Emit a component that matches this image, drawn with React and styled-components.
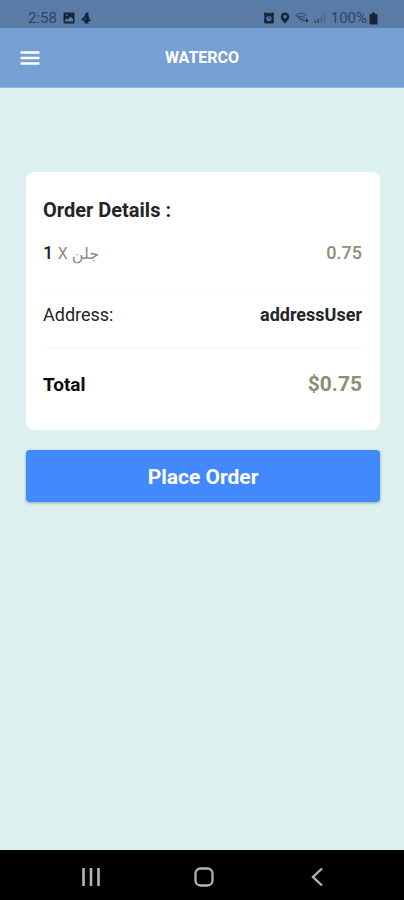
import styled, { createGlobalStyle } from 'styled-components';

const GlobalStyle = createGlobalStyle`
  * {
    box-sizing: border-box;
  }
  body {
    margin: 0;
    background-color: #dcf0ef;
    font-family: Roboto, 'DejaVu Sans', sans-serif;
    color: #222428;
  }
`;

const Page = styled.div`
  display: flex;
  flex-direction: column;
  min-height: 100vh;
`;

const StatusBar = styled.div`
  display: flex;
  align-items: center;
  justify-content: space-between;
  height: 28px;
  padding: 8px 26px 0 28px;
  background-color: #5a7ba6;
  color: #30435c;
  font-size: 15px;
  line-height: 20px;
`;

const StatusGroup = styled.div`
  display: flex;
  align-items: center;
  gap: ${props => props.$gap};
`;

const StatusIcon = styled.svg`
  display: block;
  flex: none;
  color: #17253a;
`;

const Toolbar = styled.header`
  display: grid;
  grid-template-columns: 60px 1fr 60px;
  align-items: center;
  height: 60px;
  background-color: #769fd3;
  border-bottom: 1px solid #8eb4d4;
  color: #ffffff;
`;

const MenuButton = styled.button`
  display: flex;
  align-items: center;
  justify-content: center;
  height: 48px;
  padding: 0;
  border: none;
  background: transparent;
  color: inherit;
  cursor: pointer;
`;

const ToolbarTitle = styled.h1`
  margin: 0;
  text-align: center;
  font-size: 16px;
  font-weight: 700;
  line-height: 24px;
`;

const Content = styled.main`
  flex: 1;
  padding: 84px 24px 24px 26px;
`;

const Card = styled.section`
  padding: 22px 18px 10px 17px;
  border-radius: 8px;
  background-color: #ffffff;
`;

const CardTitle = styled.h2`
  margin: 0;
  font-size: 20px;
  font-weight: 700;
  line-height: 32px;
`;

const Row = styled.div`
  display: flex;
  align-items: center;
  justify-content: space-between;
  height: ${props => props.$height};
`;

const Divider = styled.hr`
  height: 1px;
  margin: ${props => props.$space} 0 0;
  border: none;
  background-color: #f7f8f8;
`;

const ItemName = styled.span`
  font-size: 18px;
  font-weight: 500;
`;

const ItemUnit = styled.span`
  color: #8c8c8c;
  font-size: 16px;
  font-weight: 400;
`;

const Price = styled.span`
  color: #8f8d76;
  font-size: ${props => (props.$large ? '21px' : '18px')};
  font-weight: ${props => (props.$large ? 700 : 500)};
`;

const Label = styled.span`
  font-size: 18px;
  font-weight: ${props => (props.$bold ? 700 : 400)};
`;

const TotalLabel = styled(Label)`
  color: #0c0c0e;
  font-size: 19px;
`;

const PlaceOrderButton = styled.button`
  display: block;
  width: 100%;
  height: 52px;
  margin-top: 20px;
  padding: 2px 0 0;
  border: none;
  border-radius: 4px;
  background-color: #4289fd;
  box-shadow: 0 1px 3px rgba(60, 90, 120, 0.5);
  color: #ffffff;
  font-family: inherit;
  font-size: 21px;
  font-weight: 700;
  cursor: pointer;
`;

const NavBar = styled.nav`
  display: flex;
  align-items: center;
  justify-content: space-between;
  height: 50px;
  padding: 3px 75px 0 79px;
  background-color: #000000;
`;

const NavButton = styled.button`
  display: flex;
  padding: 0;
  border: none;
  background: transparent;
  color: #b4b4b4;
  cursor: pointer;
`;

const PictureIcon = () => (
  <StatusIcon width="12" height="12" viewBox="0 0 12 12">
    <path
      fill="currentColor"
      fillRule="evenodd"
      d="M1.5.5h9a1 1 0 0 1 1 1v9a1 1 0 0 1-1 1h-9a1 1 0 0 1-1-1v-9a1 1 0 0 1 1-1zM2 9.5h8V7L7.500 4.500 5 7.500 3.500 6.500 2 8zM3 2.500V4h1.500V2.500z"
    />
  </StatusIcon>
);

const StepsIcon = () => (
  <StatusIcon width="10" height="12" viewBox="0 0 10 12">
    <path
      fill="currentColor"
      d="M5 .5h2.500V4l1 2v2H10v1H7.500v2.500h-4v-2L.5 8V6.800L3 5z"
    />
    <path d="M4.500 5.500L3 7.500h1.800z" fill="#5a7ba6" />
  </StatusIcon>
);

const AlarmIcon = () => (
  <StatusIcon width="12" height="12" viewBox="0 0 12 12">
    <path fill="currentColor" d="M1 .5h3l-3 3zM11 .5H8l3 3z" />
    <path
      fill="currentColor"
      d="M1.500 2.500L4 1h4l2.500 1.500.5 7-1 2H2l-1-2z"
    />
    <circle cx="6" cy="6.500" r="2.600" fill="#5a7ba6" />
    <path d="M6 4.500v2.200h1.500" fill="none" stroke="currentColor" />
  </StatusIcon>
);

const PinIcon = () => (
  <StatusIcon width="10" height="12" viewBox="0 0 10 12">
    <path
      fill="currentColor"
      fillRule="evenodd"
      d="M5 .5a4.300 4.300 0 0 1 4.300 4.300C9.300 7.500 6.500 9.500 5 11.800 3.500 9.500.7 7.500.7 4.800A4.300 4.300 0 0 1 5 .5zM5 3a1.700 1.700 0 1 0 0 3.400A1.700 1.700 0 0 0 5 3z"
    />
  </StatusIcon>
);

const WifiIcon = () => (
  <StatusIcon width="14" height="12" viewBox="0 0 14 12">
    <g fill="none" stroke="#30435c">
      <path d="M.5 3.500C4 .5 8 .5 11.500 3.500" />
      <path d="M2.500 5.800C5 3.800 7.500 3.800 10 5.800" />
      <path d="M4 8c1.500-1.300 3-1.300 4.500 0l-2 2.500" />
      <path d="M1 3.500l9 5.500" />
    </g>
    <path fill="currentColor" d="M10 8h1V6.500h1V8h1.500L12 10.500z" />
  </StatusIcon>
);

const SignalIcon = () => (
  <StatusIcon width="12" height="12" viewBox="0 0 12 12">
    <path fill="#30435c" d="M.5 8.500H2V11H.5zM3.500 7H5v4H3.500z" />
    <path fill="#4a678d" d="M6.500 4.500H8V11H6.500zM9.800 1.500h1.400V11H9.800z" />
  </StatusIcon>
);

const BatteryIcon = () => (
  <StatusIcon width="9" height="13" viewBox="0 0 9 13">
    <path
      fill="currentColor"
      d="M3 .5h3V2h1.500a1 1 0 0 1 1 1v8.500a1 1 0 0 1-1 1h-6a1 1 0 0 1-1-1V3a1 1 0 0 1 1-1H3z"
    />
  </StatusIcon>
);

const App = () => (
  <>
    <GlobalStyle />
    <Page>
      <StatusBar>
        <StatusGroup $gap="6px">
          <span>2:58</span>
          <PictureIcon />
          <StepsIcon />
        </StatusGroup>
        <StatusGroup $gap="5px">
          <AlarmIcon />
          <PinIcon />
          <WifiIcon />
          <SignalIcon />
          <StatusGroup $gap="2px">
            <span>100%</span>
            <BatteryIcon />
          </StatusGroup>
        </StatusGroup>
      </StatusBar>
      <Toolbar>
        <MenuButton type="button" aria-label="Menu">
          <svg width="20" height="14" viewBox="0 0 20 14">
            <path
              d="M.5 1.500h19M.5 7h19M.5 12.500h19"
              stroke="currentColor"
              strokeWidth="2.400"
            />
          </svg>
        </MenuButton>
        <ToolbarTitle>WATERCO</ToolbarTitle>
      </Toolbar>
      <Content>
        <Card>
          <CardTitle>Order Details :</CardTitle>
          <Row $height="52px">
            <ItemName>
              1 <ItemUnit>X جلن</ItemUnit>
            </ItemName>
            <Price>0.75</Price>
          </Row>
          <Divider $space="12px" />
          <Row $height="46px">
            <Label>Address:</Label>
            <Label $bold>addressUser</Label>
          </Row>
          <Divider $space="10px" />
          <Row $height="72px">
            <TotalLabel $bold>Total</TotalLabel>
            <Price $large>$0.75</Price>
          </Row>
        </Card>
        <PlaceOrderButton type="button">Place Order</PlaceOrderButton>
      </Content>
      <NavBar>
        <NavButton type="button" aria-label="Recent apps">
          <svg width="24" height="24" viewBox="0 0 24 24">
            <path
              d="M4.500 3v18M12 3v18M19.500 3v18"
              stroke="currentColor"
              strokeWidth="2.600"
            />
          </svg>
        </NavButton>
        <NavButton type="button" aria-label="Home">
          <svg width="24" height="24" viewBox="0 0 24 24">
            <rect
              x="3.500"
              y="3.500"
              width="17"
              height="17"
              rx="5"
              fill="none"
              stroke="currentColor"
              strokeWidth="2.300"
            />
          </svg>
        </NavButton>
        <NavButton type="button" aria-label="Back">
          <svg width="24" height="24" viewBox="0 0 24 24">
            <path
              d="M17 3.500L8 12l9 8.500"
              fill="none"
              stroke="currentColor"
              strokeWidth="2.400"
            />
          </svg>
        </NavButton>
      </NavBar>
    </Page>
  </>
);

export default App;
